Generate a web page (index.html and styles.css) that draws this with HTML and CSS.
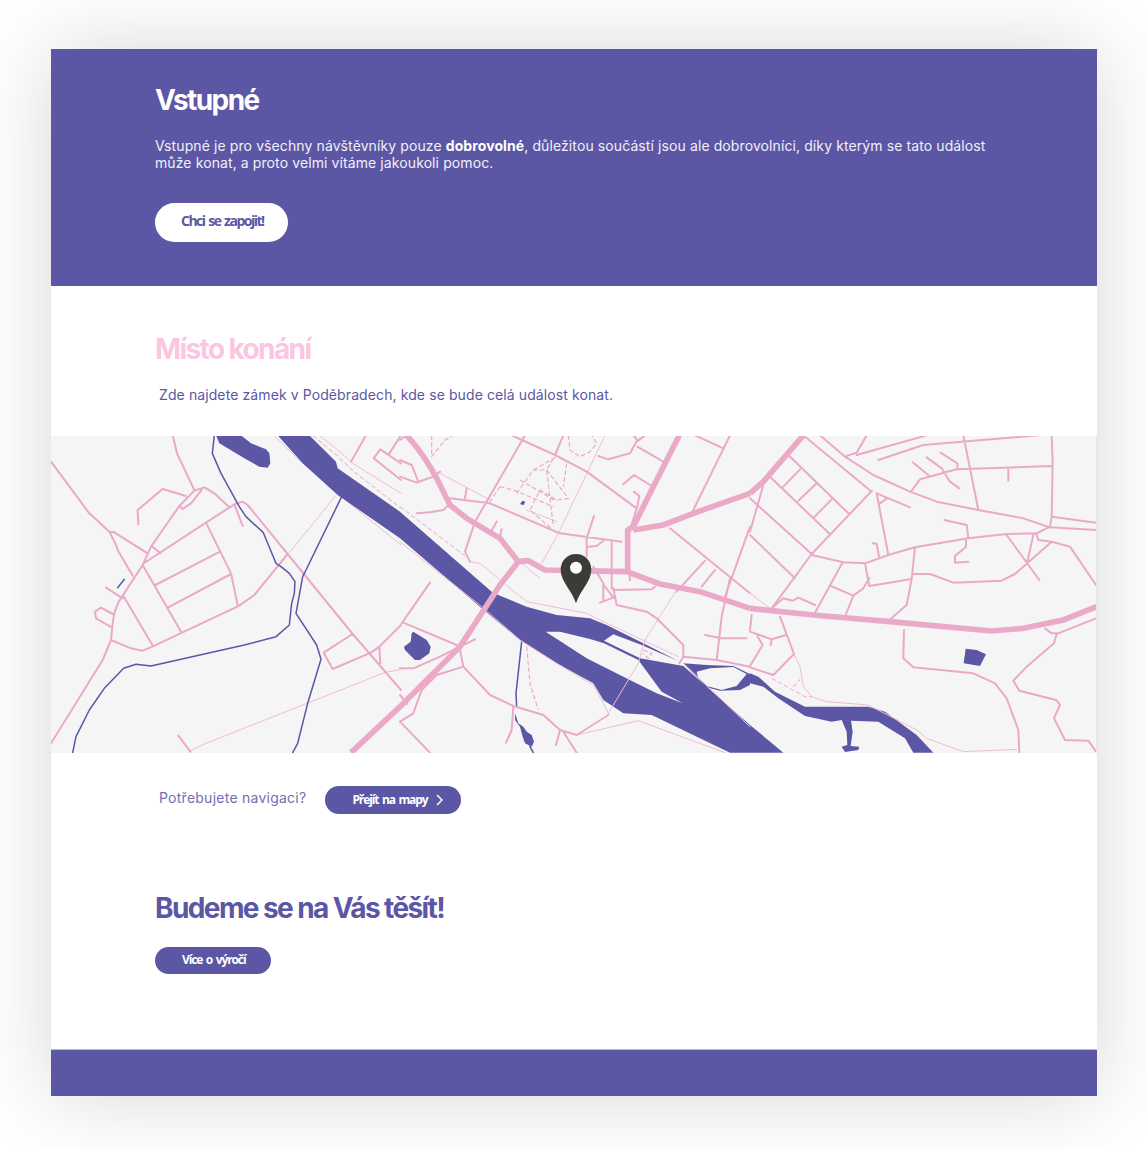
FILE: index.html
```html
<!DOCTYPE html>
<html lang="cs">
<head>
<meta charset="utf-8">
<title>Vstupné</title>
<link rel="stylesheet" href="styles.css">
</head>
<body>
<main class="card">
  <section class="intro">
    <h1 class="title">Vstupné</h1>
    <p class="lead">Vstupné je pro všechny návštěvníky pouze <strong>dobrovolné</strong>, důležitou součástí jsou ale dobrovolníci, díky kterým se tato událost může konat, a proto velmi vítáme jakoukoli pomoc.</p>
    <a class="btn btn-white" href="#">Chci se zapojit!</a>
  </section>

  <section class="venue">
    <h2 class="title title-pink">Místo konání</h2>
    <p class="note">Zde najdete zámek v Poděbradech, kde se bude celá událost konat.</p>
  </section>

  <svg class="map" viewBox="51 436 1046 317" width="1046" height="317" role="img" aria-label="Mapa">
    <rect class="map-bg" x="51" y="436" width="1046" height="317"/>
    <!-- left part -->
    <g transform="translate(51 430) scale(.33333)">
      <path class="water" d="M495 16L570 16L600 40L645 58L655 70L658 100L650 113L625 110L580 85L530 55L505 40Z"/>
      <path class="pale" d="M852 200L715 368M418 962L465 940L1000 728L1050 718M668 16L745 90L840 175L1050 345M805 16L860 60L905 100L1050 190"/>
      <path class="pale dash" d="M785 16L860 78L905 122L1050 235"/>
      <path class="road" d="M0 95L115 250L175 305L195 345L200 360L245 437M175 305L190 307L290 370M365 16L378 70L430 180M262 283L260 240L335 177L405 198M180 630L185 580Q190 530 215 497L275 405L300 350L385 228L430 182L460 172L490 190L535 232M385 228L395 237L420 220L452 180M275 402L465 278L550 223L575 215L590 225L710 372L905 612L1050 780M465 278L540 430L560 525M313 465L507 365M352 532L540 432M275 405L390 605M217 497L304 645M180 630L240 655L275 662L304 650L565 527L610 495L710 372M180 630L155 690L0 940M165 473L215 505M185 552L150 533L132 545L135 565L182 592M305 350L328 370M550 223L575 288M382 917L418 965M1050 585L985 650L960 668L845 717L818 668L905 612M985 650L988 700M945 16L900 95M968 85L988 58L1050 100M968 85L1050 150M1015 70L1050 16"/>
      <path class="creek" d="M490 16L484 70L510 130L565 230L585 260L637 308L675 400L690 410L715 430L732 455L730 490L722 520L715 585L675 620L580 645L300 708L255 703L218 715L160 775L115 840L75 920L65 968M872 200L765 420L755 440L735 550L797 645L810 688L770 820L740 940L725 968M200 473L220 448"/>
    </g>
    <!-- middle part -->
    <g transform="translate(400 430) scale(.33333)">
      <path class="water" fill-rule="evenodd" d="M-272 16L-192 95L-187 115L0 245L275 485L300 497L380 530L470 555L570 565L620 585L730 640L835 693L725 645L640 613L612 632L720 685L850 708L1050 885L1150 968L990 968L755 855L670 850L610 810L580 760L470 700L360 630L245 535L0 325L-187 195L-247 140L-292 100L-367 16ZM437 605L480 605L570 627L612 640L715 690L785 785L848 820L770 790L700 755L560 685Z"/>
      <path class="water" fill-rule="evenodd" d="M850 700L920 705L1000 708L1050 732L1050 765L1020 780L960 782L920 772L890 740ZM890 725L930 715L1000 711L1040 732L1010 768L965 780L920 768L895 745Z"/>
      <path class="water" d="M40 605L80 630L92 650L88 670L60 690L45 690L15 660L12 650L32 635L35 610ZM345 850L355 880L370 890L380 905L395 915L402 935L395 950L375 940L368 920L360 890L345 870ZM360 222L368 212L376 215L370 226Z"/>
      <path class="creek" d="M365 635L348 790L350 830M390 950L400 968"/>
      <path class="pale" d="M120 130L270 210M615 16L475 310L425 400M210 395L240 400L300 450L380 515L560 550L600 570L835 680M0 335L245 530L360 630L470 700L580 765L610 820L625 850M625 850L715 700L735 630L830 480M530 915L560 908L715 872L975 968M850 700L1050 890M365 400L420 445M380 240L470 275"/>
      <path class="pale dash" d="M0 230L205 385"/>
      <path class="road dash" d="M380 650L390 760L415 840M95 16L95 80L135 30L160 16M505 16L510 60L540 80L570 65L590 40L575 16M300 170L340 180L460 230M300 170L270 215M400 120L470 80M350 190L400 120L440 120L505 205L470 210L420 180L390 240L470 310M460 85L440 120L460 290M360 150L470 215M500 100L490 170M730 660L755 670L745 685L730 670"/>
      <path class="road" d="M335 16L465 75L560 125L710 235M375 16L225 275L195 365M490 16L465 75M595 78L625 88L690 70L712 30L700 16M712 50L790 95M735 16L710 35M670 163L702 135L750 165M702 185L718 198L712 230L680 330M885 16L970 55M990 16L875 250M150 205L270 220L480 310L665 335M200 175L195 205M0 90L35 105L55 155L100 140L120 125M0 140L50 158L100 140M50 250L90 247L130 240L145 225M270 310L290 275M270 310L300 320L305 298M195 365L210 395M580 410L610 460L610 510M600 518L640 503L612 465M635 335L635 475L645 480L755 478L765 470M582 258L560 325L560 380M565 350L590 348L610 333M640 475L650 525L740 545L770 565L850 645L850 680L838 700M850 680L950 690L1050 710M810 295L1050 490M915 392L830 485M945 420L905 470M990 445L965 560L950 690M915 615L965 625L1040 625M1050 290L975 500M690 450L688 428M625 855L530 915L480 900L430 855L340 828L270 795L190 710L110 735L65 780L40 850L0 875M178 650L190 710M0 715L40 715L120 680L180 650L225 628M5 580L90 458M10 578L170 645M0 875L90 968M340 830L335 900L318 938M480 900L468 945M490 905L530 968M0 795L22 822M0 30L20 16"/>
      <path class="road thick" d="M20 16Q70 70 110 145L150 225L200 265L300 325L355 395L385 392L435 420L520 422L680 425L780 462L900 485L1050 535M355 395L300 465L180 650L0 830L-147 968M683 425L683 300L700 290L750 190L838 16M700 300L790 285L880 250L1050 190"/>
      <path class="pin" d="M528 520C515 480 482 455 482 418A46 46 0 0 1 574 418C574 455 541 480 528 520Z"/>
      <circle class="pin-hole" cx="528" cy="413" r="18"/>
    </g>
    <!-- right part -->
    <g transform="translate(750 430) scale(.33333)">
      <path class="water" d="M0 730L25 740L75 785L165 830L355 830L405 845L500 915L550 968L490 968L465 925L385 875L303 872L308 905L302 948L328 950L325 960L285 966L275 950L292 945L290 905L275 870L245 875L165 858L85 805L40 770L0 760Z"/>
      <path class="water" d="M647 656L680 660L708 673L690 708L641 700Z"/>
      <path class="pale" d="M132 672L150 710L160 770L185 800L230 815L355 825L500 900L530 925L640 965L800 958M0 490L60 535"/>
      <path class="pale dash" d="M65 745L165 800L185 800M130 770L150 748"/>
      <path class="road" d="M210 16L285 80L370 135L480 185L560 215L685 240L820 265L900 292L1038 300M905 260L1038 278M905 16L908 100L905 260L900 290L860 310L770 312L655 325L495 352L415 375L345 400L280 397L185 375M160 16L365 185M115 75L295 250M60 140L237 310M150 118L100 170M200 160L145 212M245 208L192 262M365 183L185 372L65 535M0 205L28 230L185 372M0 315L135 445M40 165L0 305M380 190L415 375M390 220L410 205M380 190L480 232M640 16L685 240M385 90L520 45L865 16M320 75L530 16M285 80L320 68L350 16M488 97L535 135M530 82L575 115L600 155L628 175M572 68L622 100L622 118M485 182L510 148L620 118L905 108M775 115L775 152M583 270L650 285L655 325M648 330L648 350L615 378L615 398L655 395M368 340L380 342L388 385M345 400L358 468L485 447M358 445L340 475L310 497L287 555M278 397L195 548M243 468L310 497M495 352L485 447L470 525L418 570M490 432L540 432L610 458L755 452L795 432L905 335L960 350L1038 465M770 315L868 450M850 315L832 395M860 315L865 330L905 335M65 535L100 505L128 512L145 503L195 525M90 560L132 672L70 735L0 712M0 605L65 628L108 615M65 628L62 645M22 618L38 645L0 708M5 555L0 600M462 600L460 685L490 712L670 730L735 760L770 805L805 900L808 968M885 595L905 610L925 610L1038 565M920 612L912 640L830 710L790 752L808 782L918 810L930 825L912 865L945 930L1015 932L1038 965"/>
      <path class="road thick" d="M0 190L40 155L160 16M0 535L190 555L420 575L725 603L820 595L940 570L1040 530"/>
    </g>
    <rect class="map-edge" x="1096" y="436" width="1" height="317"/>
  </svg>

  <div class="navrow">
    <span class="nav-text">Potřebujete navigaci?</span>
    <a class="btn btn-blue btn-maps" href="#"><span class="btn-label">Přejít na mapy</span>
      <svg class="chev" viewBox="0 0 7 12" width="7" height="12"><path d="M1 1L6 6L1 11"/></svg>
    </a>
  </div>

  <section class="closing">
    <h2 class="title title-blue">Budeme se na Vás těšít!</h2>
    <a class="btn btn-blue btn-more" href="#"><span class="btn-label">Více o výročí</span></a>
  </section>

  <footer class="foot"></footer>
</main>
</body>
</html>
```

FILE: styles.css
```css
* { box-sizing: border-box; }
html, body { margin: 0; padding: 0; background: #fff; }
body { font-family: Inter, "Liberation Sans", sans-serif; color: #5b57a5; }

.card {
  width: 1046px;
  margin: 49px 50px 53px 51px;
  background: #fff;
  box-shadow: 0 0 80px rgba(0, 0, 0, .16);
}

.title {
  margin: 0;
  font-size: 28px;
  line-height: 34px;
  font-weight: 700;
  letter-spacing: -1.6px;
}
.title-pink { color: #fcc5e0; }
.title-blue { color: #5b57a5; }

.intro {
  background: #5b57a5;
  color: #fff;
  padding: 34px 104px 44px;
}
.lead {
  margin: 20px 0 32px;
  font-size: 14px;
  line-height: 17px;
  letter-spacing: .1px;
  width: 835px;
  color: #f1f0f8;
}
.lead strong { color: #fff; font-weight: 700; }

.btn {
  display: flex;
  align-items: center;
  font-family: "Open Sans", "Liberation Sans", sans-serif;
  font-weight: 700;
  text-decoration: none;
  word-spacing: 1.5px;
}
.btn-white {
  width: 133px;
  height: 39px;
  padding: 0 0 5px 26px;
  border-radius: 20px;
  background: #fff;
  color: #5b57a5;
  font-size: 14px;
  letter-spacing: -1.5px;
}
.btn-blue {
  background: #5b57a5;
  color: #fff;
  font-size: 12px;
  letter-spacing: -1.1px;
  border-radius: 14px;
}
.btn-label { margin-top: -2px; }

.venue { padding: 46px 104px 33px; }
.note {
  margin: 20px 0 0 4px;
  font-size: 14px;
  line-height: 17px;
  letter-spacing: .1px;
}

.map { display: block; }
.map-bg { fill: #f5f5f5; }
.map-edge { fill: #e4e4e4; }
.water { fill: #5b57a5; }
.road, .pale, .creek { fill: none; stroke-linejoin: round; stroke-linecap: round; }
.road { stroke: #eba9c8; stroke-width: 6; }
.thick { stroke-width: 17; stroke-linecap: butt; }
.pale { stroke: #f0bcd5; stroke-width: 3; }
.creek { stroke: #5b57a5; stroke-width: 4.5; }
.dash { stroke-dasharray: 14 7; stroke-linecap: butt; stroke-width: 3.5; }
.pin { fill: #3c3c37; }
.pin-hole { fill: #fff; }

.navrow {
  display: flex;
  gap: 19px;
  padding: 33px 104px 0 108px;
}
.nav-text {
  font-size: 14px;
  line-height: 24px;
  letter-spacing: .25px;
  color: #716eb3;
}
.btn-maps { width: 136px; height: 28px; padding-left: 27px; }
.chev { margin-left: 9px; margin-top: -1px; fill: none; stroke: #fff; stroke-width: 1.5; }

.closing { padding: 77px 104px 75px; }
.btn-more { width: 116px; height: 27px; margin-top: 22px; padding-left: 27px; }

.foot {
  height: 47px;
  background: #5b57a5;
  border-top: 1px solid #bdbbdc;
}
```
